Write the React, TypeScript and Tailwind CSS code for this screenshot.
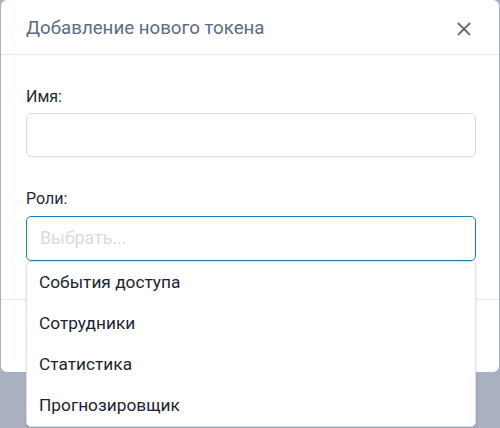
import { X } from "lucide-react";

const roles = ["События доступа", "Сотрудники", "Статистика", "Прогнозировщик"];

export default function App() {
  return (
    <div
      className="h-[428px] w-[500px] overflow-hidden bg-[#a9b0bf] pl-px"
      style={{ fontFamily: "Roboto, 'Noto Sans', sans-serif" }}
    >
      <div className="relative flex h-[372px] w-[498px] flex-col rounded-md bg-white">
        {/* Header */}
        <div className="flex h-[55px] shrink-0 items-center justify-between border-b border-[#e3e6ee] pl-[25px] pr-[24px] pt-[3px]">
          <h2 className="text-[18.7px] text-[#5d6b85]">Добавление нового токена</h2>
          <X className="h-[22px] w-[22px] text-[#5d6b85]" strokeWidth={2} />
        </div>

        {/* Body */}
        <div className="flex flex-col px-[25px] pt-[31px]">
          <label className="mb-[5px] text-[16px] leading-[22px] text-[#252a35]">Имя:</label>
          <input className="h-[44px] w-[450px] rounded-[5px] border border-[#d9dce8] outline-none" />

          <label className="mb-[6px] mt-[31px] text-[16px] leading-[22px] text-[#252a35]">Роли:</label>
          <div className="relative w-[450px]">
            <div className="flex h-[45px] items-center rounded-[5px] border border-[#1b7db3] px-[13px] text-[17.8px] text-[#d6dae9]">
              Выбрать...
            </div>
            <div className="absolute left-0 top-full z-10 w-full rounded-[5px] border border-[#dde0ea] bg-white shadow-sm">
              {roles.map((r) => (
                <div key={r} className="flex h-[41px] items-center px-[12px] pt-[1px] text-[17.3px] text-[#1e2330]">
                  {r}
                </div>
              ))}
            </div>
          </div>
        </div>

        {/* Footer */}
        <div className="mt-auto h-[73px] border-t border-[#e6e8ef]" />
      </div>
    </div>
  );
}
